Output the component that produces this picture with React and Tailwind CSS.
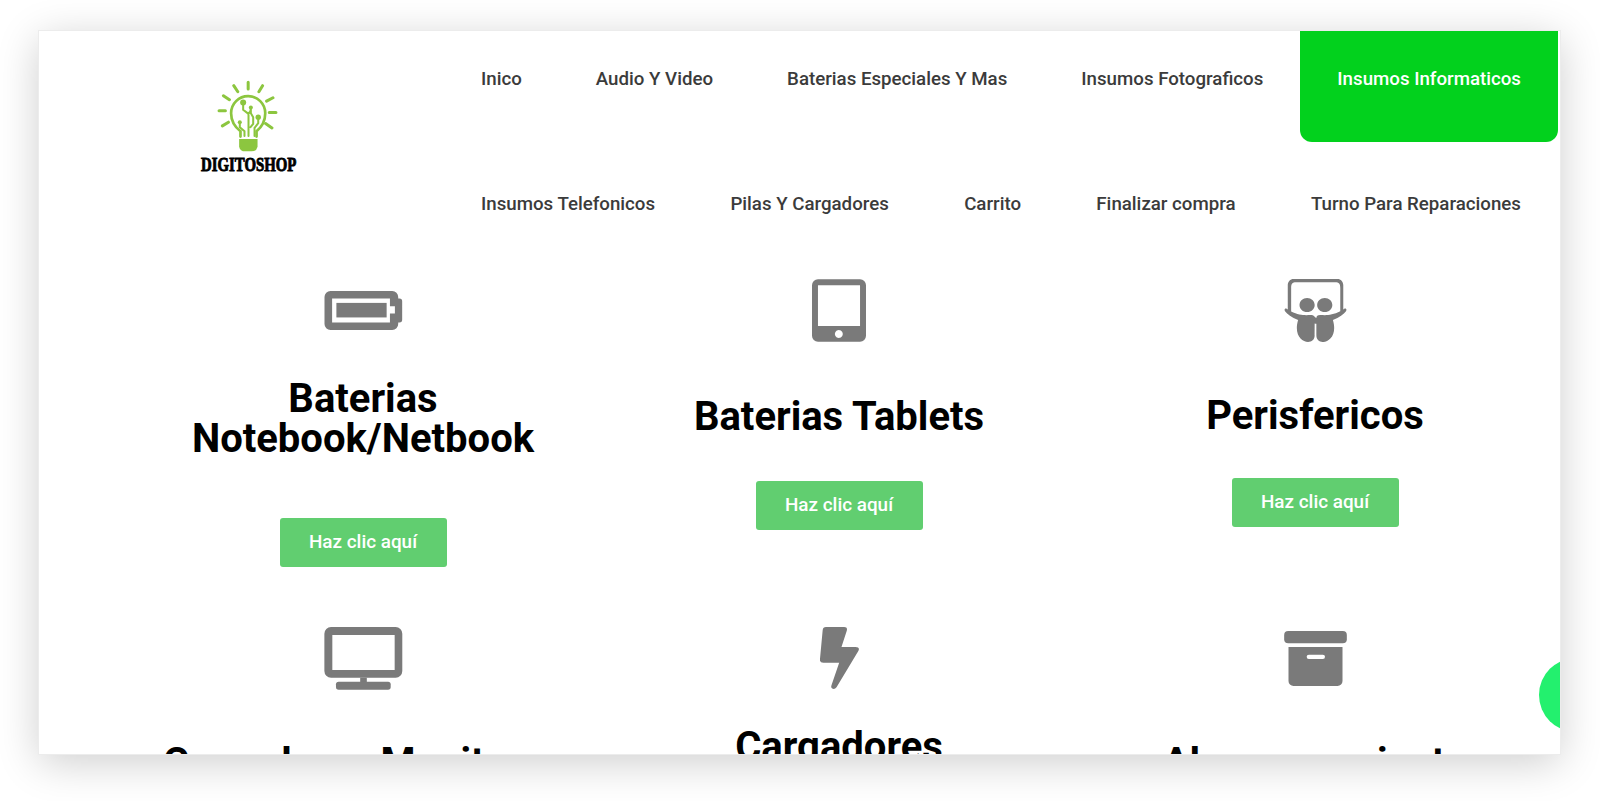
import React from "react";
import { FaSlideshare } from "react-icons/fa";

const NAV_TOP = [
	{ label: "Inico" },
	{ label: "Audio Y Video" },
	{ label: "Baterias Especiales Y Mas" },
	{ label: "Insumos Fotograficos" },
	{ label: "Insumos Informaticos", active: true },
];

const NAV_BOTTOM = [
	{ label: "Insumos Telefonicos" },
	{ label: "Pilas Y Cargadores" },
	{ label: "Carrito" },
	{ label: "Finalizar compra" },
	{ label: "Turno Para Reparaciones" },
];

function BatteryIcon() {
	return (
		<svg viewBox="72 92 236 118" className="h-[39px] w-[79px] fill-[#7a7a7a]">
			<path
				fillRule="evenodd"
				d="M90 92H277a18 18 0 0 1 18 18v5h4a8 8 0 0 1 8 8v56a8 8 0 0 1-8 8h-4v5a18 18 0 0 1-18 18H90a18 18 0 0 1-18-18V110a18 18 0 0 1 18-18ZM95 115V187H270V160H285V138H270V115Z"
			/>
			<rect x="108" y="128" width="152" height="44" />
		</svg>
	);
}

function TabletIcon() {
	return (
		<svg viewBox="67 57 163 188" className="h-[63px] w-[54px] fill-[#7a7a7a]">
			<path
				fillRule="evenodd"
				d="M85 57H212a18 18 0 0 1 18 18V227a18 18 0 0 1-18 18H85a18 18 0 0 1-18-18V75a18 18 0 0 1 18-18ZM85 75V198H212V75ZM148 210a12 12 0 1 0 .01 0Z"
			/>
		</svg>
	);
}

function DesktopIcon() {
	return (
		<svg viewBox="72 50 236 190" className="h-[63px] w-[79px] fill-[#7a7a7a]">
			<path
				fillRule="evenodd"
				d="M92 50H287a20 20 0 0 1 20 20V183a20 20 0 0 1-20 20H92a20 20 0 0 1-20-20V70a20 20 0 0 1 20-20ZM96 74V180H284V74Z"
			/>
			<rect x="180" y="203" width="20" height="14" />
			<rect x="107" y="215" width="165" height="24" rx="8" />
		</svg>
	);
}

function BoltIcon() {
	return (
		<svg viewBox="90 50 118 190" className="h-[63px] w-[39px] fill-[#7a7a7a]">
			<path d="M108 50H163Q174 50 171 61L155 110H197Q212 110 206 122L140 232Q134 240 127 236Q122 233 125 225L148 158H100Q88 158 90 146L98 60Q99 50 108 50Z" />
		</svg>
	);
}

function ArchiveIcon() {
	return (
		<svg viewBox="42 47 188 165" className="h-[55px] w-[63px] fill-[#7a7a7a]">
			<rect x="42" y="47" width="188" height="37" rx="12" />
			<path
				fillRule="evenodd"
				d="M55 95H217V197a15 15 0 0 1-15 15H70a15 15 0 0 1-15-15ZM116 118a4 4 0 0 0 0 13H158a4 4 0 0 0 0-13Z"
			/>
		</svg>
	);
}

function SlideshareIcon() {
	return <FaSlideshare className="h-[63px] w-[63px] text-[#7a7a7a]" />;
}

const CARDS = [
	{
		title: "Baterias Notebook/Netbook",
		Icon: BatteryIcon,
		heading: "mt-[37px] mb-[59px]",
	},
	{ title: "Baterias Tablets", Icon: TabletIcon, heading: "mt-[55px] mb-[44px]" },
	{ title: "Perisfericos", Icon: SlideshareIcon, heading: "mt-[54px] mb-[42px]" },
	{ title: "Cargadores Monitores", Icon: DesktopIcon, heading: "mt-[53px] mb-[46px]" },
	{ title: "Cargadores Notebook/Netbook", Icon: BoltIcon, heading: "mt-[37px] mb-[59px]" },
	{ title: "Almacenamiento", Icon: ArchiveIcon, heading: "mt-[53px] mb-[46px]" },
];

function Logo() {
	return (
		<div className="flex w-[405px] flex-col pl-[174px] pt-[46px]">
			<svg
				viewBox="100 50 200 230"
				className="h-[77px] w-[67px] self-start"
				fill="none"
				stroke="#8cc63f"
				strokeLinecap="round"
			>
				<g strokeWidth="9">
					<path d="M205 66V86M162 76L174 94M131 106L149 118M118 151H137M128 196L146 185M248 76L237 94M279 112L260 122M288 156H268M276 202L257 189" />
				</g>
				<path
					strokeWidth="8"
					d="M182 228V212Q154 190 154 158A51 51 0 0 1 256 158Q256 190 230 212V228"
				/>
				<g strokeWidth="6">
					<path d="M190 128V148L206 160V226M213 142V158L220 170V190L212 200M235 170V188L224 202V226M180 186V200L194 212V226M205 160Q214 154 213 142" />
				</g>
				<g fill="#8cc63f" stroke="none">
					<circle cx="190" cy="126" r="9" />
					<circle cx="213" cy="141" r="6" />
					<circle cx="235" cy="170" r="8" />
					<circle cx="180" cy="185" r="6" />
					<path d="M178 235H233V258Q230 272 215 272H196Q181 272 178 258Z" />
				</g>
			</svg>
			<span className="ml-[-12px] mt-[2px] block w-[96px] origin-left scale-x-[0.78] whitespace-nowrap font-['Liberation_Serif',serif] text-[19px] font-bold leading-[17px] text-black [-webkit-text-stroke:0.9px_black]">
				DIGITOSHOP
			</span>
		</div>
	);
}

function NavRow({ items, rowHeight }) {
	return (
		<ul className={`flex items-start justify-between ${rowHeight}`}>
			{items.map((item) => (
				<li key={item.label} className="shrink-0">
					<a
						href="#"
						className={
							item.active
								? "block h-[111px] whitespace-nowrap rounded-b-[12px] bg-[#02d11d] px-[37px] pt-[36px] text-[18.7px] font-medium leading-[24px] text-white"
								: "block h-[111px] whitespace-nowrap px-[37px] pt-[36px] text-[18.7px] font-medium leading-[24px] text-[#3b3b3b]"
						}
					>
						{item.label}
					</a>
				</li>
			))}
		</ul>
	);
}

function Card({ card }) {
	const Icon = card.Icon;
	return (
		<div className="flex flex-col items-center">
			<div className="flex h-[63px] items-center justify-center">
				<Icon />
			</div>
			<h2
				className={`${card.heading} w-[420px] text-center text-[40px] font-bold leading-[40px] text-black`}
			>
				{card.title}
			</h2>
			<a
				href="#"
				className="flex h-[49px] w-[167px] items-center justify-center rounded-[3px] bg-[#61ce70] text-[18.9px] font-medium text-white"
			>
				Haz clic aquí
			</a>
		</div>
	);
}

export default function App() {
	return (
		<div className="h-[801px] w-[1600px] overflow-hidden bg-white pl-[39px] pt-[31px] font-['Roboto',sans-serif]">
			<div className="relative h-[723px] w-[1521px] overflow-hidden bg-white outline outline-1 outline-[#ececec] shadow-[0_8px_40px_rgba(0,0,0,0.2)]">
				<header className="flex">
					<Logo />
					<nav className="w-[1114px]">
						<NavRow items={NAV_TOP} rowHeight="h-[125px]" />
						<NavRow items={NAV_BOTTOM} rowHeight="h-[123px]" />
					</nav>
				</header>
				<main className="ml-[86px] grid w-[1428px] grid-cols-3 [grid-auto-rows:348px]">
					{CARDS.map((card) => (
						<Card key={card.title} card={card} />
					))}
				</main>
				<div className="absolute left-[1500px] top-[627px] h-[74px] w-[74px] rounded-full bg-[#23f06e]" />
			</div>
		</div>
	);
}
